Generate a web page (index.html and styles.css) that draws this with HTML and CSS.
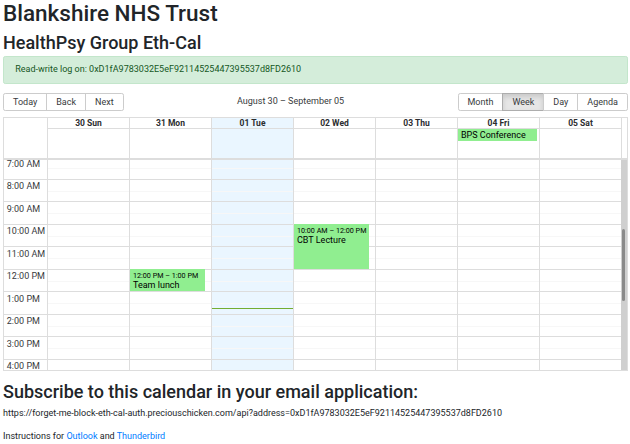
FILE: index.html
```html
<!DOCTYPE html>
<html lang="en">
<head>
<meta charset="utf-8">
<title>Blankshire NHS Trust</title>
<link rel="stylesheet" href="styles.css">
</head>
<body>
<div class="page">
  <h1 class="title">Blankshire NHS Trust</h1>
  <h2 class="subtitle">HealthPsy Group Eth-Cal</h2>
  <div class="alert">Read-write log on: 0xD1fA9783032E5eF92114525447395537d8FD2610</div>

  <div class="toolbar">
    <div class="btn-group">
      <button>Today</button><button>Back</button><button>Next</button>
    </div>
    <span class="toolbar-label">August 30 – September 05</span>
    <div class="btn-group">
      <button>Month</button><button class="active">Week</button><button>Day</button><button>Agenda</button>
    </div>
  </div>

  <div class="cal">
    <div class="cal-head">
      <div class="gutter-head"></div>
      <div class="head-cols">
        <div class="head-col"><div class="head-label">30 Sun</div><div class="allday"></div></div>
        <div class="head-col"><div class="head-label">31 Mon</div><div class="allday"></div></div>
        <div class="head-col today"><div class="head-label">01 Tue</div><div class="allday"></div></div>
        <div class="head-col"><div class="head-label">02 Wed</div><div class="allday"></div></div>
        <div class="head-col"><div class="head-label">03 Thu</div><div class="allday"></div></div>
        <div class="head-col"><div class="head-label">04 Fri</div><div class="allday"><div class="ad-event">BPS Conference</div></div></div>
        <div class="head-col"><div class="head-label">05 Sat</div><div class="allday"></div></div>
      </div>
      <div class="head-spacer"></div>
    </div>

    <div class="cal-body">
      <div class="gutter">
        <div class="grp"><span class="lbl">7:00 AM</span></div>
        <div class="grp"><span class="lbl">8:00 AM</span></div>
        <div class="grp"><span class="lbl">9:00 AM</span></div>
        <div class="grp"><span class="lbl">10:00 AM</span></div>
        <div class="grp"><span class="lbl">11:00 AM</span></div>
        <div class="grp"><span class="lbl">12:00 PM</span></div>
        <div class="grp"><span class="lbl">1:00 PM</span></div>
        <div class="grp"><span class="lbl">2:00 PM</span></div>
        <div class="grp"><span class="lbl">3:00 PM</span></div>
        <div class="grp"><span class="lbl">4:00 PM</span></div>
      </div>

      <div class="day">
        <div class="grp"></div><div class="grp"></div><div class="grp"></div><div class="grp"></div><div class="grp"></div>
        <div class="grp"></div><div class="grp"></div><div class="grp"></div><div class="grp"></div><div class="grp"></div>
      </div>

      <div class="day">
        <div class="grp"></div><div class="grp"></div><div class="grp"></div><div class="grp"></div><div class="grp"></div>
        <div class="grp"></div><div class="grp"></div><div class="grp"></div><div class="grp"></div><div class="grp"></div>
        <div class="ev" style="top:111.5px;height:22.5px;">
          <span class="ev-label">12:00 PM – 1:00 PM</span>
          <span class="ev-title">Team lunch</span>
        </div>
      </div>

      <div class="day today">
        <div class="grp"></div><div class="grp"></div><div class="grp"></div><div class="grp"></div><div class="grp"></div>
        <div class="grp"></div><div class="grp"></div><div class="grp"></div><div class="grp"></div><div class="grp"></div>
        <div class="now" style="top:151px;"></div>
      </div>

      <div class="day">
        <div class="grp"></div><div class="grp"></div><div class="grp"></div><div class="grp"></div><div class="grp"></div>
        <div class="grp"></div><div class="grp"></div><div class="grp"></div><div class="grp"></div><div class="grp"></div>
        <div class="ev" style="top:66.5px;height:45px;">
          <span class="ev-label">10:00 AM – 12:00 PM</span>
          <span class="ev-title">CBT Lecture</span>
        </div>
      </div>

      <div class="day">
        <div class="grp"></div><div class="grp"></div><div class="grp"></div><div class="grp"></div><div class="grp"></div>
        <div class="grp"></div><div class="grp"></div><div class="grp"></div><div class="grp"></div><div class="grp"></div>
      </div>

      <div class="day">
        <div class="grp"></div><div class="grp"></div><div class="grp"></div><div class="grp"></div><div class="grp"></div>
        <div class="grp"></div><div class="grp"></div><div class="grp"></div><div class="grp"></div><div class="grp"></div>
      </div>

      <div class="day">
        <div class="grp"></div><div class="grp"></div><div class="grp"></div><div class="grp"></div><div class="grp"></div>
        <div class="grp"></div><div class="grp"></div><div class="grp"></div><div class="grp"></div><div class="grp"></div>
      </div>

      <div class="scrollbar"><div class="thumb"></div></div>
    </div>
  </div>

  <h2 class="subscribe">Subscribe to this calendar in your email application:</h2>
  <p class="url">https://forget-me-block-eth-cal-auth.preciouschicken.com/api?address=0xD1fA9783032E5eF92114525447395537d8FD2610</p>
  <p class="instr">Instructions for <a href="#">Outlook</a> and <a href="#">Thunderbird</a></p>
</div>
</body>
</html>
```

FILE: styles.css
```css
html { font-size: 9px; }
* { box-sizing: border-box; }
body {
  margin: 0;
  font-family: Roboto, "Liberation Sans", sans-serif;
  font-size: 9px;
  line-height: 1.5;
  color: #212529;
  background: #fff;
}
.page { padding: 0 2px 0 3px; }

.title {
  font-size: 22.5px;
  font-weight: 500;
  line-height: 1.2;
  margin: 0 0 4.5px;
}
.subtitle {
  font-size: 18px;
  font-weight: 500;
  line-height: 1.2;
  margin: 0 0 3px;
}

.alert {
  padding: 6px 11.25px;
  border: 1px solid #c3e6cb;
  background: #d4edda;
  color: #155724;
  border-radius: 2.25px;
  margin-bottom: 9px;
}

/* toolbar */
.toolbar {
  display: flex;
  align-items: center;
  margin-bottom: 5.6px;
  color: #373a3c;
}
.btn-group { display: inline-flex; }
.btn-group button {
  font: inherit;
  line-height: normal;
  color: #373a3c;
  background: none;
  border: 1px solid #ccc;
  padding: 3.375px 9px;
  margin: 0;
  border-radius: 0;
}
.btn-group button + button { margin-left: -1px; }
.btn-group button:first-child { border-radius: 2.25px 0 0 2.25px; }
.btn-group button:last-child { border-radius: 0 2.25px 2.25px 0; }
.btn-group button.active {
  background: #e6e6e6;
  border-color: #adadad;
  box-shadow: inset 0 3px 5px rgba(0, 0, 0, .125);
}
.toolbar-label {
  flex: 1;
  text-align: center;
  padding: 0 5.6px;
}

/* calendar */
.cal {
  border: 1px solid #ddd;
  color: #373a3c;
}
.cal-head { display: flex; }
.gutter-head { width: 43px; flex: none; }
.head-cols { flex: 1; display: flex; }
.head-col {
  flex: 1 1 0;
  min-width: 0;
  border-left: 1px solid #ddd;
}
.head-label {
  height: 11px;
  border-bottom: 1px solid #ddd;
  text-align: center;
  font-weight: bold;
  font-size: 8.5px;
  line-height: 10.5px;
  white-space: nowrap;
  color: #2b2d2f;
}
.allday {
  height: 29px;
  padding: 0 2px 0 0;
}
.head-spacer {
  width: 6px;
  flex: none;
  border-left: 1px solid #ddd;
}
.today { background: #eaf6ff; }

.ad-event {
  background: #90ee90;
  color: #000;
  padding: 1px 3px;
  font-size: 9px;
  line-height: normal;
  white-space: nowrap;
  overflow: hidden;
}

.cal-body {
  display: flex;
  align-items: flex-start;
  height: 212px;
  overflow: hidden;
  border-top: 2px solid #ddd;
}
.gutter {
  width: 43px;
  flex: none;
  margin-top: -2.5px;
}
.day {
  flex: 1 1 0;
  min-width: 0;
  border-left: 1px solid #ddd;
  margin-top: -2.5px;
  position: relative;
}
.grp {
  height: 22.5px;
  border-bottom: 1px solid #ddd;
}
.day .grp {
  background: linear-gradient(#f7f7f7, #f7f7f7) 0 11px / 100% 1px no-repeat;
}
.lbl {
  display: block;
  padding: 1.5px 2.8px 0;
  font-size: 9px;
  line-height: normal;
  white-space: nowrap;
}

.ev {
  position: absolute;
  left: 0;
  width: 92.5%;
  background: #90ee90;
  color: #000;
  padding: 2px 3px 1px;
  overflow: hidden;
  display: flex;
  flex-direction: column;
}
.ev-label {
  font-size: 7.2px;
  line-height: normal;
  white-space: nowrap;
}
.ev-title {
  font-size: 9px;
  line-height: normal;
}
.now {
  position: absolute;
  left: 0;
  right: 0;
  height: 1px;
  background: #74ad31;
}

.scrollbar {
  width: 6px;
  flex: none;
  align-self: stretch;
  background: #cfcfcf;
  position: relative;
}
.thumb {
  position: absolute;
  left: 1px;
  width: 3px;
  top: 69px;
  height: 72px;
  background: #8a8a8a;
  border-radius: 2px;
}

.subscribe {
  font-size: 18px;
  font-weight: 500;
  line-height: 1.2;
  margin: 10px 0 4.5px;
}
.url, .instr { margin: 0 0 9px; }
a { color: #007bff; text-decoration: none; }
```
